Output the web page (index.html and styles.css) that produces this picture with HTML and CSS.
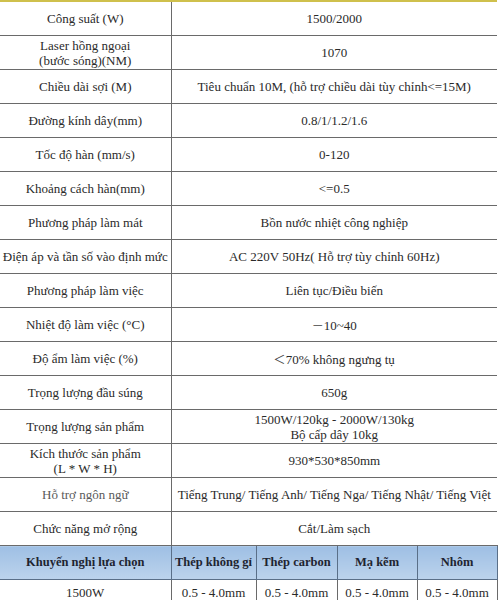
FILE: index.html
```html
<!DOCTYPE html>
<html lang="vi">
<head>
<meta charset="utf-8">
<title>Thông số kỹ thuật</title>
<link rel="stylesheet" href="styles.css">
</head>
<body>
<table class="spec">
  <colgroup>
    <col class="c-label">
    <col class="c-a">
    <col class="c-b">
    <col class="c-c">
    <col class="c-d">
  </colgroup>
  <tbody>
    <tr><td class="label">Công suất (W)</td><td class="value" colspan="4">1500/2000</td></tr>
    <tr><td class="label two">Laser hồng ngoại<br>(bước sóng)(NM)</td><td class="value" colspan="4">1070</td></tr>
    <tr><td class="label">Chiều dài sợi (M)</td><td class="value" colspan="4">Tiêu chuẩn 10M, (hỗ trợ chiều dài tùy chỉnh&lt;=15M)</td></tr>
    <tr><td class="label">Đường kính dây(mm)</td><td class="value" colspan="4">0.8/1/1.2/1.6</td></tr>
    <tr><td class="label">Tốc độ hàn (mm/s)</td><td class="value" colspan="4">0-120</td></tr>
    <tr><td class="label">Khoảng cách hàn(mm)</td><td class="value" colspan="4">&lt;=0.5</td></tr>
    <tr><td class="label">Phương pháp làm mát</td><td class="value" colspan="4">Bồn nước nhiệt công nghiệp</td></tr>
    <tr><td class="label">Điện áp và tần số vào định mức</td><td class="value" colspan="4">AC 220V 50Hz( Hỗ trợ tùy chỉnh 60Hz)</td></tr>
    <tr><td class="label">Phương pháp làm việc</td><td class="value" colspan="4">Liên tục/Điều biến</td></tr>
    <tr><td class="label">Nhiệt độ làm việc (°C)</td><td class="value" colspan="4"><span class="wide">－</span>10~40</td></tr>
    <tr><td class="label">Độ ẩm làm việc (%)</td><td class="value" colspan="4"><span class="wide">＜</span>70% không ngưng tụ</td></tr>
    <tr><td class="label">Trọng lượng đầu súng</td><td class="value" colspan="4">650g</td></tr>
    <tr><td class="label">Trọng lượng sản phẩm</td><td class="value two" colspan="4">1500W/120kg - 2000W/130kg<br>Bộ cấp dây 10kg</td></tr>
    <tr><td class="label two">Kích thước sản phẩm<br>(L * W * H)</td><td class="value" colspan="4">930*530*850mm</td></tr>
    <tr><td class="label muted">Hỗ trợ ngôn ngữ</td><td class="value" colspan="4">Tiếng Trung/ Tiếng Anh/ Tiếng Nga/ Tiếng Nhật/ Tiếng Việt</td></tr>
    <tr><td class="label">Chức năng mở rộng</td><td class="value" colspan="4">Cắt/Làm sạch</td></tr>
    <tr class="head">
      <td>Khuyến nghị lựa chọn</td>
      <td>Thép không gỉ</td>
      <td>Thép carbon</td>
      <td>Mạ kẽm</td>
      <td>Nhôm</td>
    </tr>
    <tr class="rec">
      <td>1500W</td>
      <td>0.5 - 4.0mm</td>
      <td>0.5 - 4.0mm</td>
      <td>0.5 - 4.0mm</td>
      <td>0.5 - 4.0mm</td>
    </tr>
  </tbody>
</table>
</body>
</html>
```

FILE: styles.css
```css
html, body {
  margin: 0;
  padding: 0;
  background: #ffffff;
}

body {
  font-family: "Liberation Serif", "Noto Sans CJK SC", serif;
  font-size: 13px;
  color: #2a2a2a;
  overflow: hidden;
}

.spec {
  width: 497px;
  table-layout: fixed;
  border-collapse: collapse;
  border-top: 2px solid #cfc04c;
}

.c-label { width: 171px; }
.c-a { width: 85px; }
.c-b { width: 81px; }
.c-c { width: 80px; }
.c-d { width: 80px; }

.spec td {
  height: 33px;
  padding: 0;
  text-align: center;
  vertical-align: middle;
  border-bottom: 1px solid #6a6a6a;
  line-height: 15px;
  white-space: nowrap;
  overflow: hidden;
}

.spec td.label {
  border-right: 1px solid #6a6a6a;
}

.spec td.muted {
  color: #5a5a5a;
}

.wide {
  font-family: "Noto Sans CJK SC", sans-serif;
  font-size: 12px;
  color: #444;
}

.spec .head td {
  background: linear-gradient(#9ebfe4, #bcd3ec);
  font-weight: bold;
  font-size: 12.5px;
  border: 1px solid #5a6f88;
  border-left: none;
  color: #1e2430;
}

.spec .rec td {
  height: 24px;
  border-right: 1px solid #6a6a6a;
  border-bottom: none;
}
```
